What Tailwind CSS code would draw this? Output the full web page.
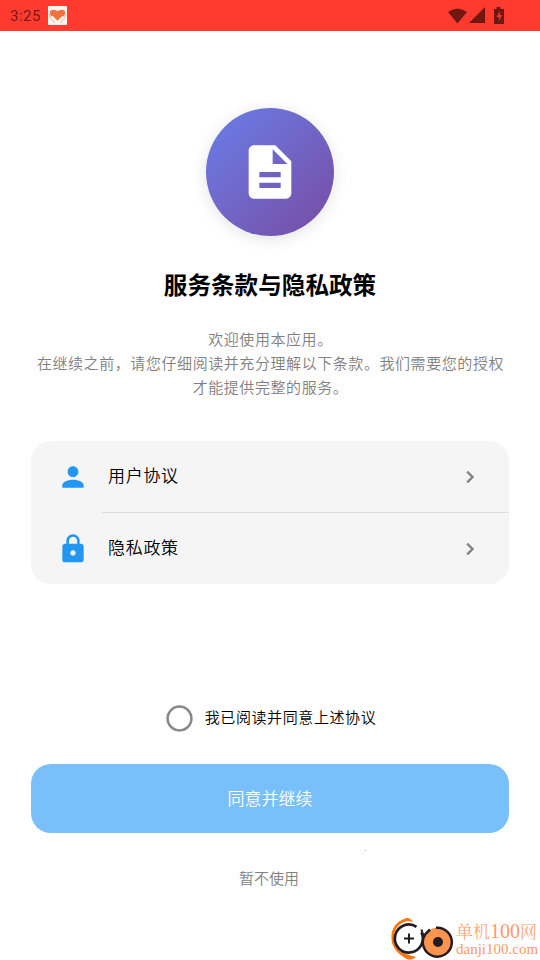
<!DOCTYPE html>
<html lang="zh-CN">
<head>
<meta charset="utf-8">
<title>服务条款与隐私政策</title>
<script src="https://cdn.jsdelivr.net/npm/@tailwindcss/browser@4"></script>
</head>
<body class="relative flex h-[960px] w-[540px] flex-col overflow-hidden bg-white font-['Noto_Sans_CJK_SC',sans-serif] font-[350] text-black">
<header class="flex h-[31px] shrink-0 items-center bg-[#ff3b30] pl-[10px] pr-[34px]">
  <span class="mt-[1px] font-[Roboto,sans-serif] text-[15px] font-normal tracking-[0.5px] text-[#7a1712]">3:25</span>
  <svg class="ml-[7px] size-[19px]" viewBox="0 0 19 19"><rect width="19" height="19" rx="1" fill="#fff5ee"/><path d="M9.500 14.500 3 10Q0 5 4 4 7.500 3 9.500 5.500 11.500 3 15 4 19 5 16 10z" fill="#f4703f"/><path d="M1.300 8Q1 13 6.500 16.500M17.700 8Q18 13 12.500 16.500" fill="none" stroke="#f0b48a" stroke-width="1"/><path d="M4 10l3.500 3v3M15 10l-3.500 3v3" fill="none" stroke="#fff" stroke-width="1"/></svg>
  <div class="ml-auto flex items-center">
    <svg class="mr-px h-[16px] w-[20px]" viewBox="0 0 20 16"><path d="M0 4Q9.500-3 19 4L9.500 15.500z" fill="#701712"/></svg>
    <svg class="h-[17px] w-[17px]" viewBox="0 0 17 17"><path d="M0 16 16 0v16z" fill="#701712"/></svg>
    <svg class="ml-[7px] mr-px h-[17px] w-[12px]" viewBox="0 0 12 17"><path d="M1 2h2.500V0h4v2H11v15H1z" fill="#701712"/><path d="M7 4 3.500 10H6v4l3.200-6H6.700z" fill="#f1392f"/></svg>
  </div>
</header>
<main class="flex flex-col items-center px-[31px] pt-[77px]">
  <div class="flex size-[128px] items-center justify-center rounded-full bg-linear-to-br from-[#667eea] to-[#764ba2] shadow-[0_3px_16px_rgba(0,0,0,0.11)]">
    <svg class="size-[64px]" viewBox="0 0 24 24" fill="#fff"><path d="M14 2H6c-1.100 0-1.990.9-1.990 2L4 20c0 1.100.89 2 1.990 2H18c1.100 0 2-.9 2-2V8zm2 16H8v-2h8zm0-4H8v-2h8zm-3-5V3.500L18.500 9z"/></svg>
  </div>
  <h1 class="mt-[30px] h-[36px] text-[23.600px] leading-[36px] font-bold">服务条款与隐私政策</h1>
  <p class="mt-[25px] whitespace-nowrap pl-px text-center text-[15px] leading-[24px] tracking-[0.570px] text-[#808080]">欢迎使用本应用。<br>在继续之前，请您仔细阅读并充分理解以下条款。我们需要您的授权<br>才能提供完整的服务。</p>
  <section class="mt-[42px] h-[143px] w-full rounded-[20px] bg-[#f5f5f5]">
    <div class="flex h-[71px] items-center pl-[25.500px] pr-[27px]">
      <svg class="size-[32px]" viewBox="0 0 24 24" fill="#2196f3"><path d="M12 12c2.210 0 4-1.790 4-4s-1.790-4-4-4-4 1.790-4 4 1.790 4 4 4m0 2c-2.670 0-8 1.340-8 4v2h16v-2c0-2.660-5.330-4-8-4"/></svg>
      <span class="ml-[19.500px] pb-[3px] text-[17px] tracking-[0.700px]">用户协议</span>
      <svg class="ml-auto mt-px size-[24px]" viewBox="0 0 24 24" fill="#858585"><path d="M10 6 8.590 7.410 13.170 12l-4.580 4.590L10 18l6-6z" stroke="#858585" stroke-width=".5"/></svg>
    </div>
    <div class="ml-[71px] h-px bg-[#dedede]"></div>
    <div class="flex h-[71px] items-center pl-[25.500px] pr-[27px]">
      <svg class="size-[32px]" viewBox="0 0 24 24" fill="#2196f3"><path d="M18 8h-1V6c0-2.760-2.240-5-5-5S7 3.240 7 6v2H6c-1.100 0-2 .9-2 2v10c0 1.100.9 2 2 2h12c1.100 0 2-.9 2-2V10c0-1.100-.9-2-2-2m-6 9c-1.100 0-2-.9-2-2s.9-2 2-2 2 .9 2 2-.9 2-2 2m3.100-9H8.900V6c0-1.710 1.390-3.100 3.100-3.100s3.100 1.390 3.100 3.100z"/></svg>
      <span class="ml-[19.500px] pb-[3px] text-[17px] tracking-[0.700px]">隐私政策</span>
      <svg class="ml-auto mt-px size-[24px]" viewBox="0 0 24 24" fill="#858585"><path d="M10 6 8.590 7.410 13.170 12l-4.580 4.590L10 18l6-6z" stroke="#858585" stroke-width=".5"/></svg>
    </div>
  </section>
  <label class="mt-[121px] flex h-[27px] items-center gap-[12px] pl-[2px]">
    <svg class="size-[27px]" viewBox="0 0 27 27"><circle cx="13.500" cy="13.500" r="11.900" fill="#fff" stroke="#888" stroke-width="2.500"/></svg>
    <span class="pb-[3px] text-[15px] leading-[24px] tracking-[0.600px]">我已阅读并同意上述协议</span>
  </label>
  <button class="mt-[32px] h-[69px] w-full rounded-[20px] bg-[#79c0fa] pb-[2px] text-[17px] text-white">同意并继续</button>
  <button class="mt-[33px] h-[24px] pr-[2px] text-[15px] leading-[24px] text-[#808080]">暂不使用</button>
</main>
<span class="absolute top-[850px] left-[365px] size-px bg-[#b8ab9a]"></span>
<aside class="absolute top-[915px] left-[389px] flex h-[45px] w-[151px] font-normal">
  <svg class="h-[45px] w-[66px] shrink-0" viewBox="0 0 66 45" fill="none">
    <path d="M24 7Q20 1 15 4C4 8 1 18 3 28 6 37 12 40 16 43Q21 47 27 42L20 40C9 37 5 31 5 23 5 13 11 8 18 6z" fill="#ff760e"/>
    <circle cx="20" cy="24" r="15" fill="#fff"/>
    <path d="M27.500 11.800A14 14 0 1 0 32.500 17.500" stroke="#221d24" stroke-width="2.700"/>
    <circle cx="49" cy="27" r="14.500" fill="#ff944c"/>
    <path d="M47 12.700A14.500 14.500 0 1 1 36 19.500L41 14.500" stroke="#221d24" stroke-width="2.500"/>
    <path d="M32.500 14.500Q33 19 36 22" stroke="#221d24" stroke-width="2.200"/>
    <circle cx="49" cy="27" r="5" fill="#221d24"/>
    <path d="M20 18.500v10M15 23.500h10" stroke="#221d24" stroke-width="2"/>
  </svg>
  <div class="ml-px whitespace-nowrap text-[#ff9a68]">
    <div class="mt-[5px] flex items-baseline font-['Noto_Serif_CJK_SC','Noto_Sans_CJK_SC',serif] text-[17px] leading-[22px] font-light"><span>单机</span><span class="font-['Liberation_Serif',serif] text-[20px]">100</span><span>网</span></div>
    <div class="font-['Liberation_Serif',serif] text-[15px] leading-[15px] tracking-[0px]">danji100.com</div>
  </div>
</aside>
</body>
</html>
